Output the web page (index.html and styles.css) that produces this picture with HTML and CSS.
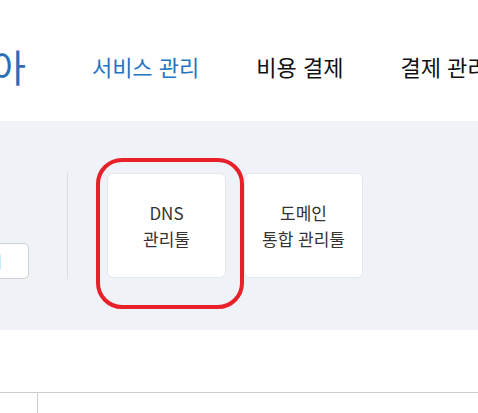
FILE: index.html
```html
<!DOCTYPE html>
<html lang="ko">
<head>
<meta charset="utf-8">
<link rel="stylesheet" href="styles.css">
</head>
<body>
<header class="gnb">
  <div class="logo">가비아</div>
  <nav class="menu">
    <a class="menu-item active">서비스 관리</a>
    <a class="menu-item">비용 결제</a>
    <a class="menu-item">결제 관리</a>
  </nav>
</header>
<section class="quick">
  <button class="quick-btn">바로가기</button>
  <div class="divider"></div>
  <div class="tool-list">
    <div class="tool-card highlighted">DNS<br>관리툴</div>
    <div class="tool-card">도메인<br>통합 관리툴</div>
  </div>
</section>
<section class="blank"></section>
<section class="table">
  <div class="col-check"></div>
  <div class="col-body">서비스 목록을 확인하고 관리하세요</div>
</section>
</body>
</html>
```

FILE: styles.css
```css
* { box-sizing: border-box; }
html, body { margin: 0; padding: 0; }
body {
  width: 478px;
  height: 413px;
  overflow: hidden;
  background: #ffffff;
  font-family: "Noto Sans CJK KR", "Noto Sans", sans-serif;
  color: #333333;
}
.gnb {
  height: 121px;
  display: flex;
  align-items: center;
  padding-top: 10px;
  white-space: nowrap;
}
.logo {
  font-size: 38px;
  color: #2a6fb6;
  margin-left: -79px;
  line-height: 44px;
}
.menu {
  display: flex;
  gap: 57px;
  margin-left: 66px;
}
.menu-item {
  font-size: 22px;
  line-height: 30px;
  color: #111111;
}
.menu-item.active { color: #2574c0; }

.quick {
  height: 209px;
  background: #eff2f7;
  display: flex;
  align-items: flex-end;
  padding: 51px 0;
}
.quick-btn {
  width: 108px;
  height: 36px;
  margin-left: -79px;
  padding: 0 26px 0 0;
  text-align: right;
  background: #ffffff;
  border: 1px solid #cfd2d7;
  border-radius: 5px;
  font-family: inherit;
  font-size: 16px;
  color: #333333;
  flex-shrink: 0;
}
.divider {
  width: 1px;
  height: 107px;
  background: #dadde2;
  margin-left: 38px;
  flex-shrink: 0;
}
.tool-list {
  display: flex;
  gap: 18px;
  margin-left: 39px;
  margin-bottom: 1px;
}
.tool-card {
  position: relative;
  width: 119px;
  height: 105px;
  background: #ffffff;
  border: 1px solid #e4e7ec;
  border-radius: 6px;
  display: flex;
  align-items: center;
  justify-content: center;
  text-align: center;
  font-size: 17px;
  line-height: 26px;
  color: #333333;
  flex-shrink: 0;
}
.tool-card.highlighted::after {
  content: "";
  position: absolute;
  left: -12px;
  top: -16px;
  width: 140px;
  height: 143px;
  border: 4px solid #e8202a;
  border-radius: 26px;
}
.blank { height: 62px; }
.table {
  border-top: 1px solid #cccccc;
  display: flex;
  height: 40px;
}
.col-check {
  width: 38px;
  border-right: 1px solid #cccccc;
}
.col-body {
  padding-left: 42px;
  padding-top: 16px;
  font-size: 16px;
  line-height: 22px;
  color: #e6e6e6;
  white-space: nowrap;
}
```
